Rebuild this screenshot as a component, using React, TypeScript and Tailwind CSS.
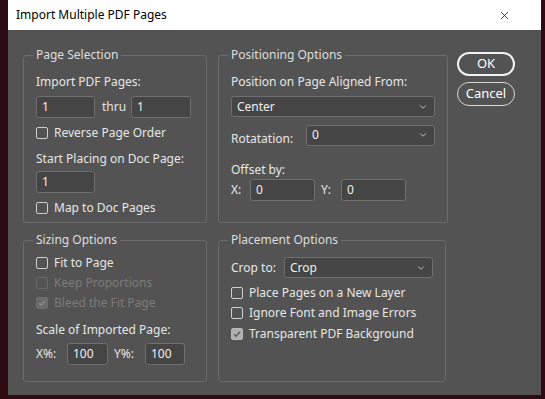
import { ChevronDown, X } from "lucide-react";
import type { ReactNode } from "react";

const font = { fontFamily: '"Segoe UI", "Noto Sans", "Open Sans", sans-serif' };

function Field({ value, className = "" }: { value: string; className?: string }) {
  return (
    <div
      className={`h-[22px] rounded-[3px] border border-[#6f6f6f] bg-[#454545] pl-[5px] text-[12px] leading-[20px] text-[#f0f0f0] ${className}`}
    >
      {value}
    </div>
  );
}

function Select({ value, className = "" }: { value: string; className?: string }) {
  return (
    <div
      className={`flex h-[21px] items-center justify-between rounded-[3px] border border-[#6f6f6f] bg-[#454545] pl-[5px] pr-[6px] text-[12px] text-[#f0f0f0] ${className}`}
    >
      <span>{value}</span>
      <ChevronDown className="h-[10px] w-[10px] text-[#d8d8d8]" strokeWidth={2} />
    </div>
  );
}

function Check({
  label,
  checked = false,
  disabled = false,
  className = "",
}: {
  label: string;
  checked?: boolean;
  disabled?: boolean;
  className?: string;
}) {
  const box = disabled
    ? checked
      ? "border-[#707070] bg-[#6a6a6a]"
      : "border-[#6a6a6a]"
    : checked
      ? "border-[#b8b8b8] bg-[#b0b0b0]"
      : "border-[#cfcfcf]";
  return (
    <div className={`flex h-[16px] items-center gap-[6px] ${className}`}>
      <span className={`flex h-[12px] w-[12px] items-center justify-center rounded-[2px] border ${box}`}>
        {checked && (
          <svg viewBox="0 0 12 12" className="h-[10px] w-[10px]">
            <path
              d="M2.5 6.2 L5 8.6 L9.6 3.4"
              fill="none"
              stroke={disabled ? "#8a8a8a" : "#5a5a5a"}
              strokeWidth="1.8"
            />
          </svg>
        )}
      </span>
      <span className={`text-[12px] ${disabled ? "text-[#7c7c7c]" : "text-[#e6e6e6]"}`}>{label}</span>
    </div>
  );
}

function Group({ title, className = "", children }: { title: string; className?: string; children: ReactNode }) {
  return (
    <fieldset className={`rounded-[3px] border border-[#6b6b6b] px-[12px] ${className}`}>
      <legend className="-ml-[3px] px-[3px] text-[12px] leading-[16px] text-[#dedede]">{title}</legend>
      {children}
    </fieldset>
  );
}

export default function App() {
  return (
    <div className="h-[399px] w-[545px] overflow-hidden bg-[#2e0a13] pl-[8px]" style={font}>
      <div className="flex h-[395px] w-[533px] flex-col bg-[#535353]">
        <div className="flex h-[30px] shrink-0 items-center justify-between bg-white pl-[8px] pr-[30px]">
          <span className="text-[12px] text-black">Import Multiple PDF Pages</span>
          <X className="h-[13px] w-[13px] text-black" strokeWidth={1.3} />
        </div>

        <div className="flex gap-[9px] pl-[15px] pt-[17px] text-[12px] text-[#e6e6e6]">
          <div className="flex flex-col gap-[9px]">
            <div className="flex gap-[11px]">
              <Group title="Page Selection" className="h-[176px] w-[184px]">
                <div className="mt-[11px] leading-[16px]">Import PDF Pages:</div>
                <div className="mt-[6px] flex items-center">
                  <Field value="1" className="w-[59px]" />
                  <span className="ml-[7px] w-[29px]">thru</span>
                  <Field value="1" className="w-[60px]" />
                </div>
                <Check label="Reverse Page Order" className="mt-[7px]" />
                <div className="mt-[10px] leading-[16px]">Start Placing on Doc Page:</div>
                <Field value="1" className="mt-[4px] w-[59px]" />
                <Check label="Map to Doc Pages" className="mt-[7px]" />
              </Group>

              <Group title="Positioning Options" className="h-[176px] w-[228px]">
                <div className="mt-[11px] leading-[16px]">Position on Page Aligned From:</div>
                <Select value="Center" className="mt-[6px] w-[204px]" />
                <div className="mt-[5px] flex items-center justify-between">
                  <span className="mt-[8px]">Rotatation:</span>
                  <Select value="0" className="w-[129px]" />
                </div>
                <div className="mt-[14px] leading-[16px]">Offset by:</div>
                <div className="mt-[1px] flex items-center">
                  <span className="w-[19px]">X:</span>
                  <Field value="0" className="w-[65px]" />
                  <span className="ml-[6px] w-[20px]">Y:</span>
                  <Field value="0" className="w-[65px]" />
                </div>
              </Group>
            </div>

            <div className="flex gap-[11px]">
              <Group title="Sizing Options" className="h-[150px] w-[184px]">
                <Check label="Fit to Page" className="mt-[7px]" />
                <Check label="Keep Proportions" disabled className="mt-[4px]" />
                <Check label="Bleed the Fit Page" checked disabled className="mt-[4px]" />
                <div className="mt-[11px] leading-[16px]">Scale of Imported Page:</div>
                <div className="mt-[5px] flex items-center">
                  <span className="w-[31px]">X%:</span>
                  <Field value="100" className="w-[41px]" />
                  <span className="ml-[6px] w-[31px]">Y%:</span>
                  <Field value="100" className="w-[40px]" />
                </div>
              </Group>

              <Group title="Placement Options" className="h-[150px] w-[228px]">
                <div className="mt-[9px] flex items-center justify-between">
                  <span>Crop to:</span>
                  <Select value="Crop" className="w-[149px]" />
                </div>
                <Check label="Place Pages on a New Layer" className="mt-[7px]" />
                <Check label="Ignore Font and Image Errors" className="mt-[4px]" />
                <Check label="Transparent PDF Background" checked className="mt-[5px]" />
              </Group>
            </div>
          </div>

          <div className="flex flex-col gap-[6px] pt-[5px]">
            <button className="h-[24px] w-[58px] rounded-full border-2 border-[#f2f2f2] text-[13px] text-white">
              OK
            </button>
            <button className="h-[24px] w-[58px] rounded-full border border-[#d8d8d8] text-[13px] text-white">
              Cancel
            </button>
          </div>
        </div>
      </div>
    </div>
  );
}
